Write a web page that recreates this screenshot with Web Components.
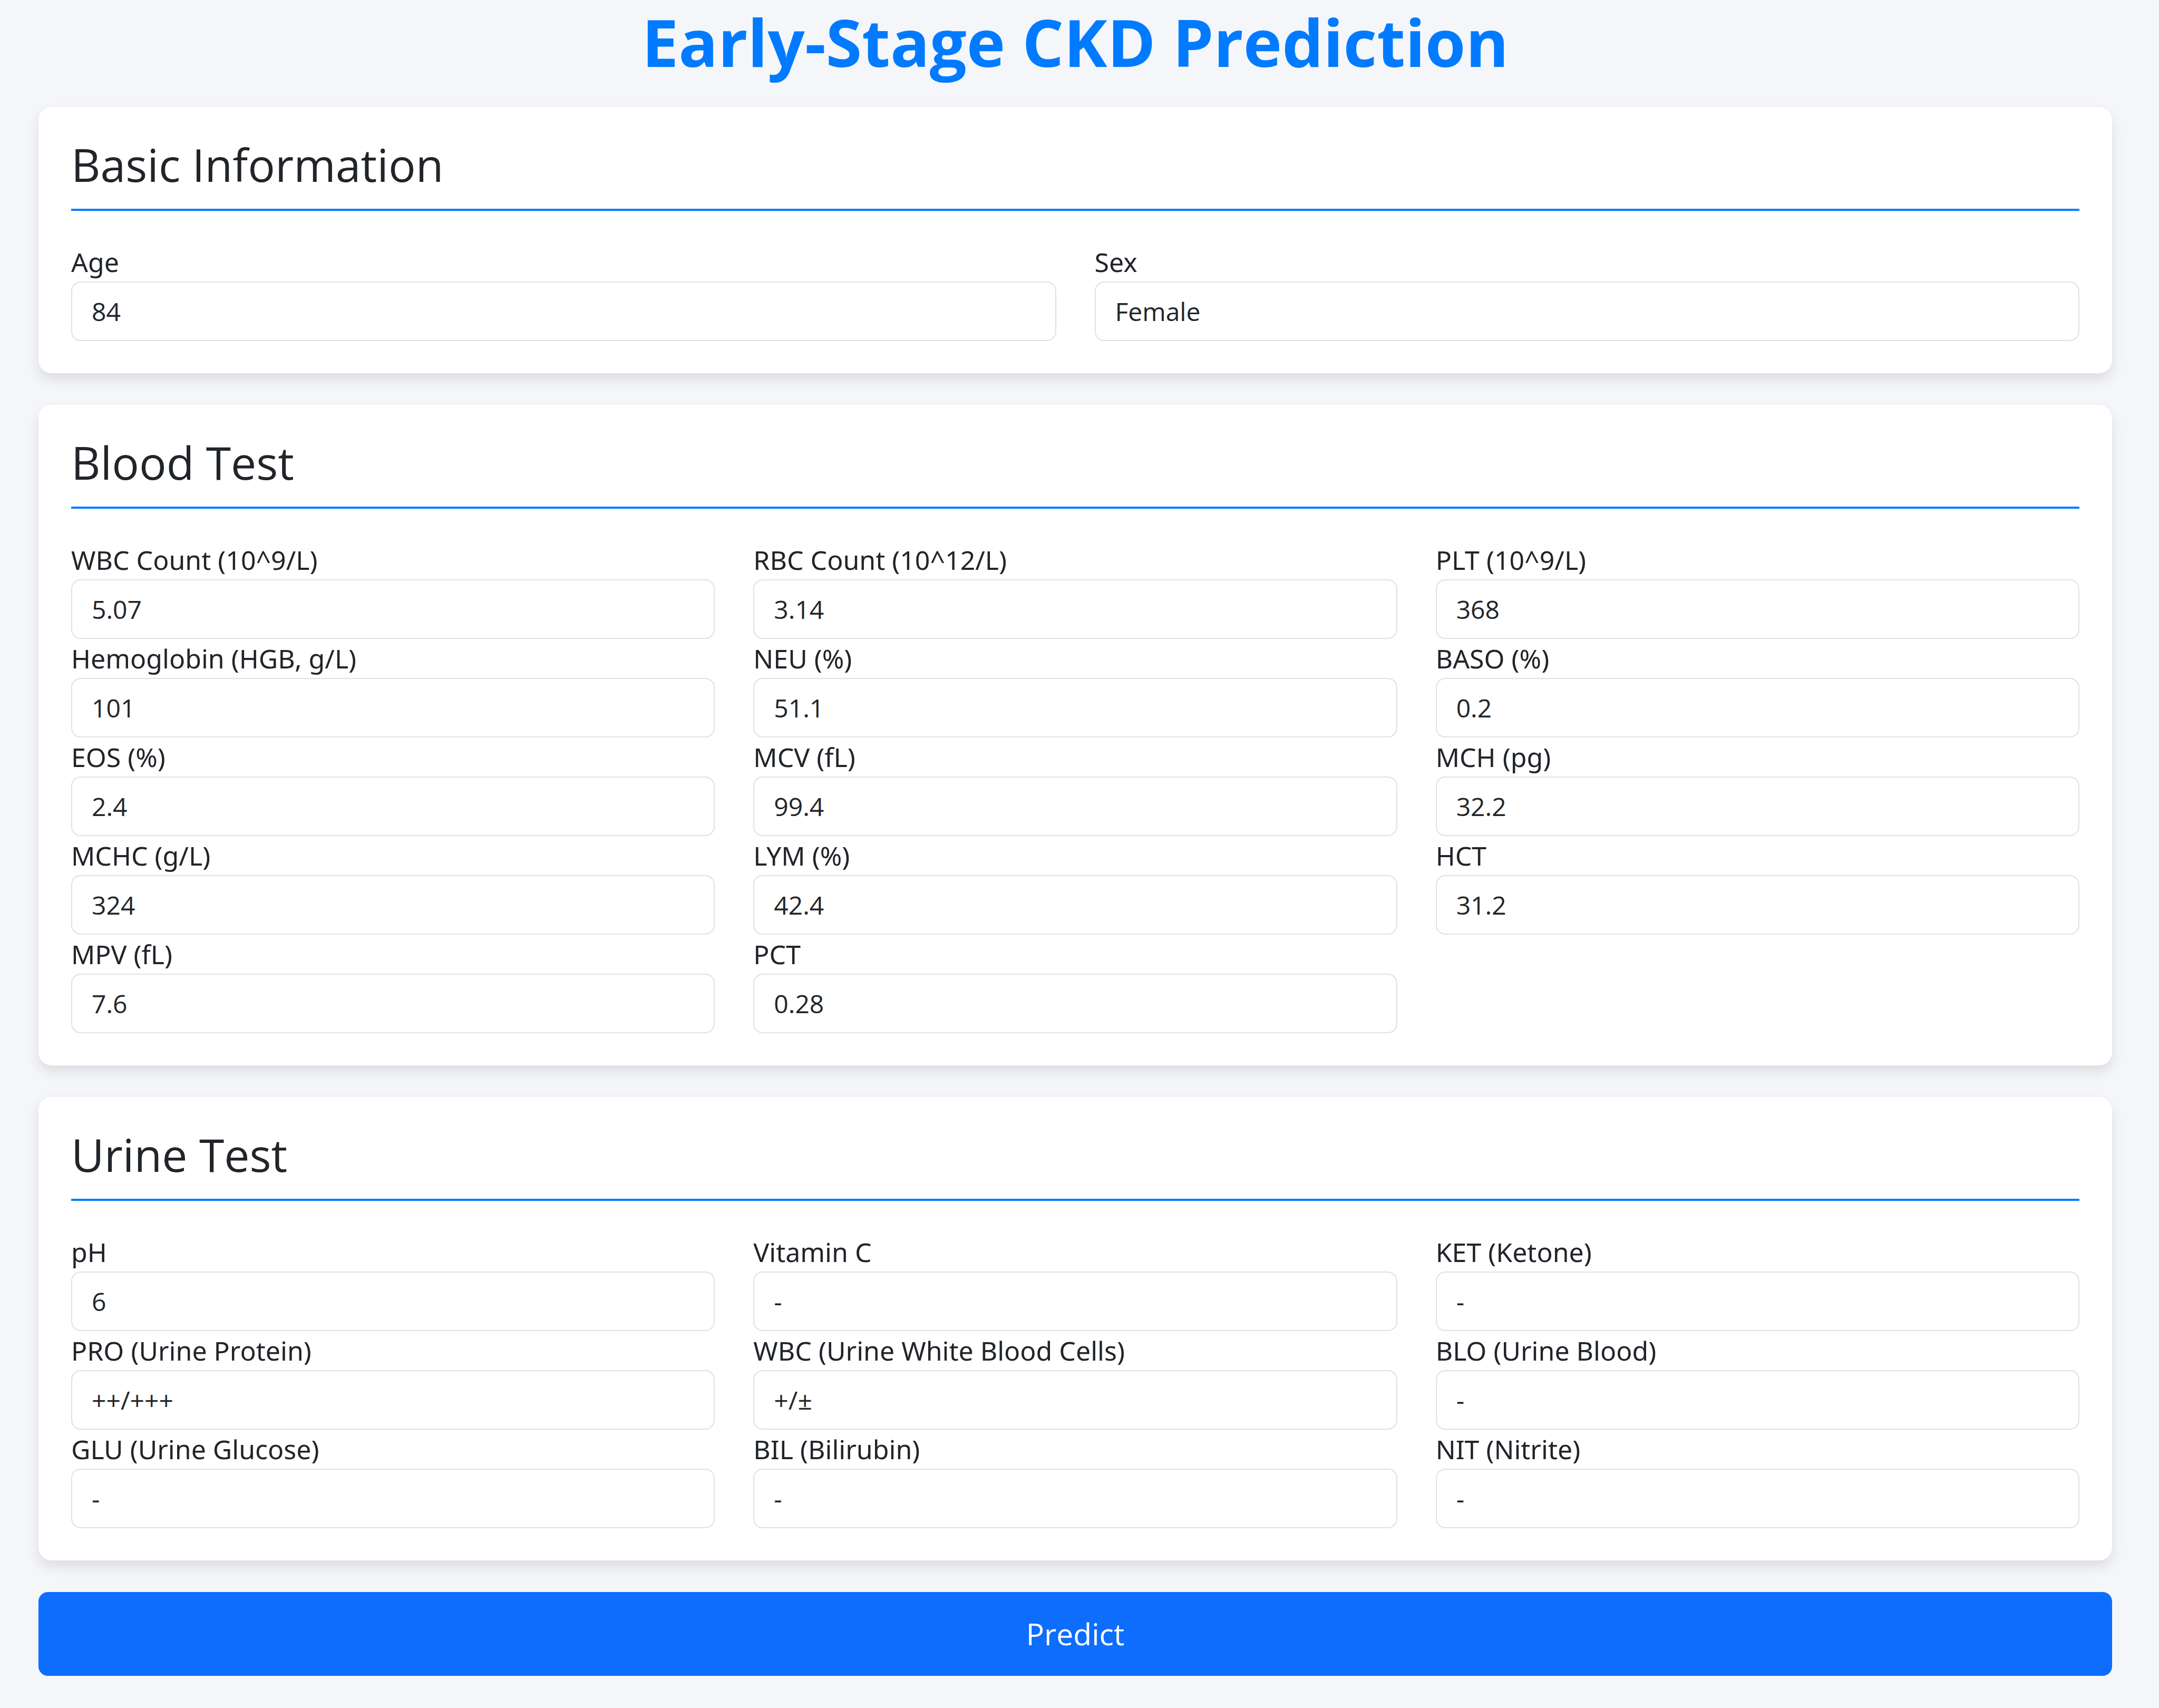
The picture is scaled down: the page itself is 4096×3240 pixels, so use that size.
<!DOCTYPE html>
<html lang="en">
<head>
<meta charset="utf-8">
<meta name="viewport" content="width=device-width, initial-scale=1">
<title>Early-Stage CKD Prediction</title>
<style>
  body {
    margin: 0;
    background: #f4f6fa;
    color: #212529;
    font-family: "Segoe UI", "Open Sans", "Noto Sans", sans-serif;
    font-size: 48px;
    line-height: 74px;
  }
</style>
</head>
<body>
<ckd-page heading="Early-Stage CKD Prediction">
  <ckd-card heading="Basic Information" columns="2">
    <ckd-field label="Age" value="84"></ckd-field>
    <ckd-field label="Sex" value="Female" kind="select"></ckd-field>
  </ckd-card>
  <ckd-card heading="Blood Test" columns="3">
    <ckd-field label="WBC Count (10^9/L)" value="5.07"></ckd-field>
    <ckd-field label="RBC Count (10^12/L)" value="3.14"></ckd-field>
    <ckd-field label="PLT (10^9/L)" value="368"></ckd-field>
    <ckd-field label="Hemoglobin (HGB, g/L)" value="101"></ckd-field>
    <ckd-field label="NEU (%)" value="51.1"></ckd-field>
    <ckd-field label="BASO (%)" value="0.2"></ckd-field>
    <ckd-field label="EOS (%)" value="2.4"></ckd-field>
    <ckd-field label="MCV (fL)" value="99.4"></ckd-field>
    <ckd-field label="MCH (pg)" value="32.2"></ckd-field>
    <ckd-field label="MCHC (g/L)" value="324"></ckd-field>
    <ckd-field label="LYM (%)" value="42.4"></ckd-field>
    <ckd-field label="HCT" value="31.2"></ckd-field>
    <ckd-field label="MPV (fL)" value="7.6"></ckd-field>
    <ckd-field label="PCT" value="0.28"></ckd-field>
  </ckd-card>
  <ckd-card heading="Urine Test" columns="3">
    <ckd-field label="pH" value="6"></ckd-field>
    <ckd-field label="Vitamin C" value="-" kind="select"></ckd-field>
    <ckd-field label="KET (Ketone)" value="-" kind="select"></ckd-field>
    <ckd-field label="PRO (Urine Protein)" value="++/+++" kind="select"></ckd-field>
    <ckd-field label="WBC (Urine White Blood Cells)" value="+/±" kind="select"></ckd-field>
    <ckd-field label="BLO (Urine Blood)" value="-" kind="select"></ckd-field>
    <ckd-field label="GLU (Urine Glucose)" value="-" kind="select"></ckd-field>
    <ckd-field label="BIL (Bilirubin)" value="-" kind="select"></ckd-field>
    <ckd-field label="NIT (Nitrite)" value="-" kind="select"></ckd-field>
  </ckd-card>
  <ckd-button>Predict</ckd-button>
</ckd-page>

<template id="page-template">
  <style>
    :host { display: block; padding: 0 89px 60px 73px; }
    h1 {
      margin: 0;
      padding: 5px 0 50px;
      color: #007bff;
      font-size: 124px;
      font-weight: 700;
      line-height: 148px;
      text-align: center;
    }
    form { display: flex; flex-direction: column; gap: 60px; }
  </style>
  <h1></h1>
  <form><slot></slot></form>
</template>

<template id="card-template">
  <style>
    :host {
      display: block;
      padding: 61px 62px;
      background: #fff;
      border-radius: 25px;
      box-shadow: 0 12px 25px rgba(0, 0, 0, 0.1);
    }
    h2 {
      margin: 0 0 60px;
      padding-bottom: 36px;
      border-bottom: 4px solid #007bff;
      font-size: 86px;
      font-weight: 400;
      line-height: 96px;
    }
    .grid {
      display: grid;
      grid-template-columns: repeat(var(--columns, 3), minmax(0, 1fr));
      column-gap: 73px;
    }
  </style>
  <h2></h2>
  <div class="grid"><slot></slot></div>
</template>

<template id="field-template">
  <style>
    :host { display: block; }
    label {
      display: block;
      font-family: "Segoe UI", "Noto Sans", sans-serif;
      font-size: 50px;
    }
    input, select {
      appearance: none;
      display: block;
      box-sizing: border-box;
      width: 100%;
      height: 113px;
      margin: 0;
      padding: 0 37px;
      border: 2px solid #dee2e6;
      border-radius: 18px;
      background: #fff;
      color: inherit;
      font: inherit;
    }
  </style>
  <label for="control"></label>
</template>

<template id="button-template">
  <style>
    :host { display: block; }
    button {
      display: block;
      width: 100%;
      padding: 37px;
      border: 0;
      border-radius: 18px;
      background: #0d6efd;
      color: #fff;
      font: inherit;
      font-size: 57px;
      line-height: 85px;
    }
  </style>
  <button type="button"><slot></slot></button>
</template>

<script>
  class TemplateElement extends HTMLElement {
    constructor() {
      super();
      const template = document.getElementById(this.constructor.template);
      this.attachShadow({ mode: "open" }).append(template.content.cloneNode(true));
    }
  }

  class CkdPage extends TemplateElement {
    static template = "page-template";
    connectedCallback() {
      this.shadowRoot.querySelector("h1").textContent = this.getAttribute("heading");
    }
  }

  class CkdCard extends TemplateElement {
    static template = "card-template";
    connectedCallback() {
      this.shadowRoot.querySelector("h2").textContent = this.getAttribute("heading");
      this.style.setProperty("--columns", this.getAttribute("columns"));
    }
  }

  class CkdField extends TemplateElement {
    static template = "field-template";
    connectedCallback() {
      if (this.control) return;
      const value = this.getAttribute("value");
      this.shadowRoot.querySelector("label").textContent = this.getAttribute("label");
      if (this.getAttribute("kind") === "select") {
        this.control = document.createElement("select");
        this.control.add(new Option(value, value, true, true));
      } else {
        this.control = document.createElement("input");
        this.control.type = "text";
        this.control.inputMode = "decimal";
        this.control.value = value;
      }
      this.control.id = "control";
      this.shadowRoot.append(this.control);
    }
  }

  class CkdButton extends TemplateElement {
    static template = "button-template";
  }

  customElements.define("ckd-page", CkdPage);
  customElements.define("ckd-card", CkdCard);
  customElements.define("ckd-field", CkdField);
  customElements.define("ckd-button", CkdButton);
</script>
</body>
</html>
